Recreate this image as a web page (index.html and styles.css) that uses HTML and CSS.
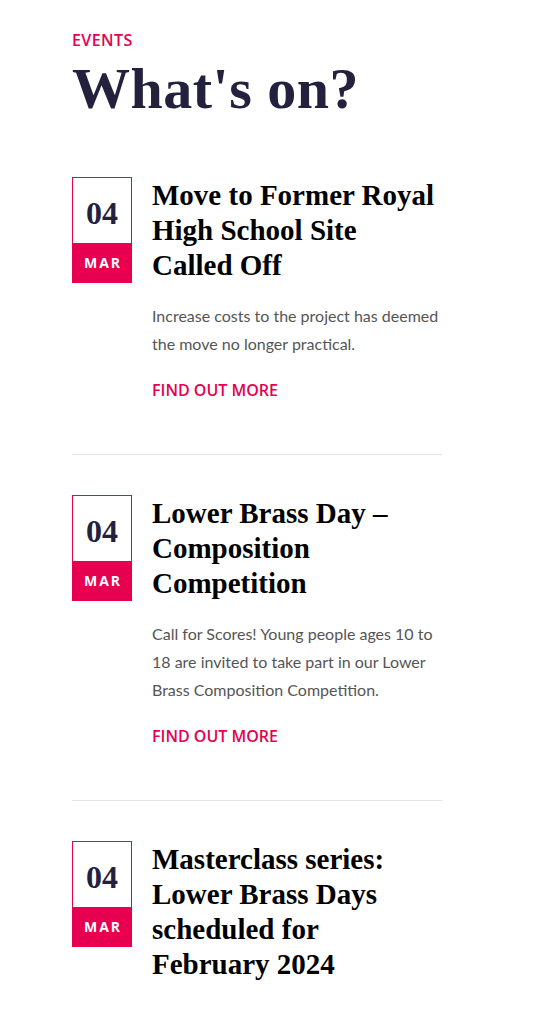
FILE: index.html
```html
<!DOCTYPE html>
<html>

	<head>
		<meta charset="UTF-8">
		<title>What's on?</title>
		<link rel="stylesheet" href="styles.css">
	</head>

	<body>
		<div class="events">
			<div class="eyebrow">EVENTS</div>
			<h1 class="heading">What's on?</h1>

			<div class="event">
				<div class="date">
					<span class="day">04</span>
					<span class="month">MAR</span>
				</div>
				<div class="info">
					<h2 class="title">Move to Former Royal High School Site Called Off</h2>
					<p class="summary">Increase costs to the project has deemed the move no longer practical.</p>
					<a href="javascript:;" class="more">FIND OUT MORE</a>
				</div>
			</div>

			<div class="event">
				<div class="date">
					<span class="day">04</span>
					<span class="month">MAR</span>
				</div>
				<div class="info">
					<h2 class="title">Lower Brass Day – Composition Competition</h2>
					<p class="summary">Call for Scores! Young people ages 10 to 18 are invited to take part in our Lower Brass Composition Competition.</p>
					<a href="javascript:;" class="more">FIND OUT MORE</a>
				</div>
			</div>

			<div class="event">
				<div class="date">
					<span class="day">04</span>
					<span class="month">MAR</span>
				</div>
				<div class="info">
					<h2 class="title">Masterclass series: Lower Brass Days scheduled for February 2024</h2>
				</div>
			</div>
		</div>
	</body>

</html>
```

FILE: styles.css
```css
* {
	margin: 0;
	padding: 0;
}

body {
	background: #fff;
	font-family: "Lato", "Open Sans", sans-serif;
}

a {
	text-decoration: none;
}

.events {
	width: 370px;
	padding: 30px 0 0 72px;
}

.eyebrow {
	font-family: "Open Sans", sans-serif;
	font-weight: 600;
	font-size: 16px;
	line-height: 20px;
	letter-spacing: 0.4px;
	color: #e6004f;
}

.heading {
	margin-top: 8px;
	font-family: "Liberation Serif", serif;
	font-weight: 700;
	font-size: 58px;
	line-height: 62px;
	color: #24213f;
	letter-spacing: 0.5px;
}

.event {
	display: flex;
	gap: 20px;
	padding: 57px 0 54px;
	border-bottom: 1px solid #e4e4e4;
}

.event + .event {
	padding-top: 40px;
}

.event:last-child {
	border-bottom: none;
}

.date {
	flex: none;
	width: 58px;
	border: 1px solid #e6004f;
	display: flex;
	flex-direction: column;
	align-self: flex-start;
}

.date .day {
	height: 65px;
	line-height: 70px;
	text-align: center;
	font-family: "Liberation Serif", serif;
	font-weight: 700;
	font-size: 32px;
	color: #24213f;
}

.date .month {
	height: 39px;
	line-height: 39px;
	text-align: center;
	background: #e6004f;
	color: #fff;
	font-family: "Open Sans", sans-serif;
	font-weight: 700;
	font-size: 14px;
	letter-spacing: 2px;
	padding-left: 2px;
}

.info {
	flex: 1;
	padding-top: 1px;
}

.title {
	max-width: 286px;
	font-family: "Liberation Serif", serif;
	font-weight: 700;
	font-size: 29px;
	line-height: 35px;
	color: #000;
}

.summary {
	margin-top: 19px;
	font-size: 16px;
	line-height: 28px;
	color: #555;
}

.more {
	display: inline-block;
	margin-top: 22px;
	font-family: "Open Sans", sans-serif;
	font-weight: 600;
	font-size: 16px;
	line-height: 20px;
	color: #e6004f;
}
```
